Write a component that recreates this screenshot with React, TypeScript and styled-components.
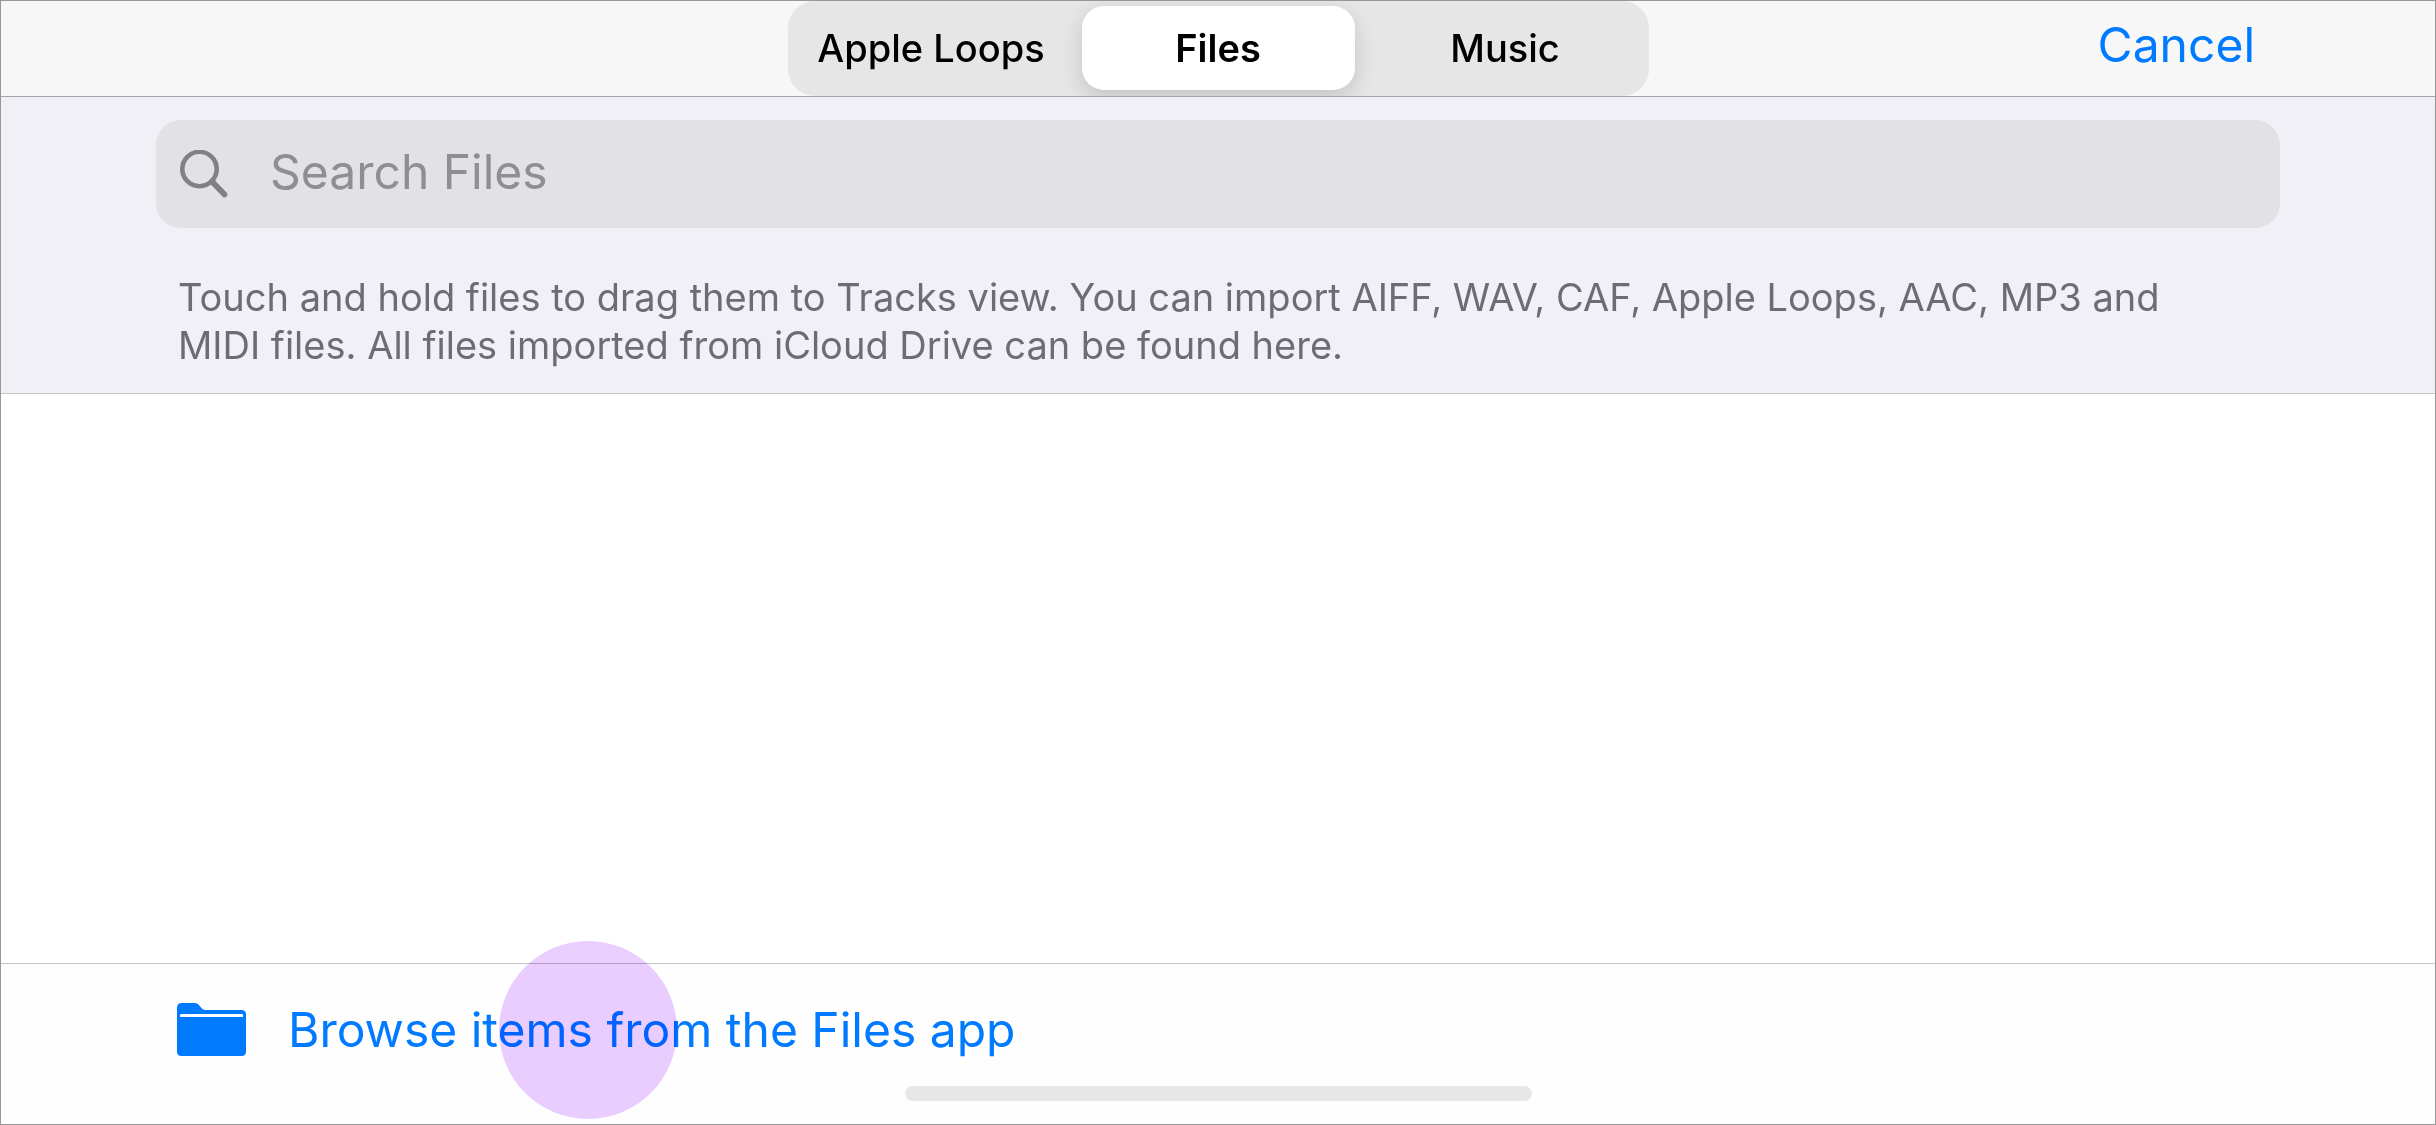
import React, { useState } from "react";
import styled, { createGlobalStyle } from "styled-components";

const GlobalStyle = createGlobalStyle`
  * { box-sizing: border-box; }
  body {
    margin: 0;
    background: #fefefe;
    font-family: Inter, "Liberation Sans", sans-serif;
  }
  button, input { font: inherit; }
`;

const Screen = styled.main`
  display: flex;
  flex-direction: column;
  min-height: 100vh;
  border: 1px solid #979797;
  background: #ffffff;
`;

const TopBar = styled.header`
  display: grid;
  grid-template-columns: 1fr auto 1fr;
  align-items: start;
  height: 96px;
  border-bottom: 1px solid #a5a4a9;
  background: #f7f7f7;
`;

const Segments = styled.nav`
  grid-column: 2;
  display: grid;
  grid-template-columns: repeat(3, 287px);
  height: 95px;
  padding-bottom: 1px;
  border-radius: 27px;
  background: #e6e6e6;
  overflow: hidden;
`;

const Segment = styled.button<{ $selected: boolean }>`
  margin: 5px 7px;
  padding: 0;
  border: 0;
  border-radius: 22px;
  background: ${(p) => (p.$selected ? "#ffffff" : "transparent")};
  box-shadow: ${(p) => (p.$selected ? "0 8px 22px rgba(0, 0, 0, 0.15)" : "none")};
  color: #000000;
  font-size: 38px;
  font-weight: ${(p) => (p.$selected ? 600 : 500)};
  line-height: 48px;
`;

const CancelButton = styled.button`
  justify-self: end;
  margin: 14px 180px 0 0;
  padding: 0;
  border: 0;
  background: none;
  color: #007aff;
  font-size: 48px;
  line-height: 60px;
`;

const SearchPanel = styled.section`
  padding: 23px 155px 24px;
  border-bottom: 1px solid #c6c5ca;
  background: #f1f0f6;
`;

const SearchBox = styled.label`
  display: flex;
  align-items: center;
  gap: 42px;
  height: 108px;
  padding: 0 24px;
  border-radius: 25px;
  background: #e2e1e6;
`;

const SearchInput = styled.input`
  flex: 1;
  min-width: 0;
  padding: 0 0 4px;
  border: 0;
  outline: 0;
  background: none;
  color: #000000;
  font-size: 48px;
  line-height: 60px;
  &::placeholder { color: #8e8e93; opacity: 1; }
`;

const Hint = styled.p`
  margin: 45px 80px 0 22px;
  color: #6d6c72;
  font-size: 38px;
  line-height: 48px;
`;

const FileList = styled.section`
  flex: 1;
`;

const BottomBar = styled.footer`
  display: flex;
  flex-direction: column;
  align-items: center;
  height: 161px;
  padding: 36px 176px 23px;
  border-top: 1px solid #c4c4c4;
  background: #fefefe;
`;

const BrowseLink = styled.a`
  position: relative;
  display: flex;
  align-self: flex-start;
  align-items: center;
  gap: 42px;
  color: #007aff;
  font-size: 48px;
  line-height: 60px;
  text-decoration: none;
`;

const TouchPoint = styled.span`
  position: absolute;
  left: 322px;
  top: 50%;
  width: 178px;
  height: 178px;
  transform: translateY(-50%);
  border-radius: 50%;
  background: #eaceff;
  mix-blend-mode: multiply;
  pointer-events: none;
`;

const HomeIndicator = styled.div`
  width: 627px;
  height: 15px;
  margin-top: auto;
  border-radius: 8px;
  background: #e7e7e7;
`;

function SearchIcon() {
  return (
    <svg width="48" height="48" viewBox="0 0 48 48" fill="none" stroke="#808085" aria-hidden="true">
      <circle cx="19.5" cy="19" r="17.2" strokeWidth="4.6" />
      <path d="M32 31.5 44.5 44.5" strokeWidth="5.8" strokeLinecap="round" />
    </svg>
  );
}

function FolderIcon() {
  return (
    <svg width="69" height="54" viewBox="0 0 69 54" aria-hidden="true">
      <path
        d="M5 0H17.5C20 0 21 1 22.5 2.7L25 5.6C26 6.7 26.8 7 28.5 7H64.5Q69 7 69 11.5V48.5Q69 53 64.5 53H4.5Q0 53 0 48.5V5Q0 0 5 0Z"
        fill="#007aff"
      />
      <path d="M3 14V12.2Q3 11 4.2 11H64.8Q66 11 66 12.2V14Z" fill="#ffffff" />
    </svg>
  );
}

const tabs = ["Apple Loops", "Files", "Music"];

export default function App() {
  const [selected, setSelected] = useState("Files");
  return (
    <>
      <GlobalStyle />
      <Screen>
        <TopBar>
          <Segments>
            {tabs.map((tab) => (
              <Segment
                key={tab}
                type="button"
                $selected={tab === selected}
                aria-pressed={tab === selected}
                onClick={() => setSelected(tab)}
              >
                {tab}
              </Segment>
            ))}
          </Segments>
          <CancelButton type="button">Cancel</CancelButton>
        </TopBar>
        <SearchPanel>
          <SearchBox>
            <SearchIcon />
            <SearchInput type="text" placeholder="Search Files" aria-label="Search Files" />
          </SearchBox>
          <Hint>
            Touch and hold files to drag them to Tracks view. You can import AIFF, WAV, CAF, Apple
            Loops, AAC, MP3 and MIDI files. All files imported from iCloud Drive can be found here.
          </Hint>
        </SearchPanel>
        <FileList aria-label="Files" />
        <BottomBar>
          <BrowseLink href="#browse">
            <FolderIcon />
            Browse items from the Files app
            <TouchPoint />
          </BrowseLink>
          <HomeIndicator />
        </BottomBar>
      </Screen>
    </>
  );
}
